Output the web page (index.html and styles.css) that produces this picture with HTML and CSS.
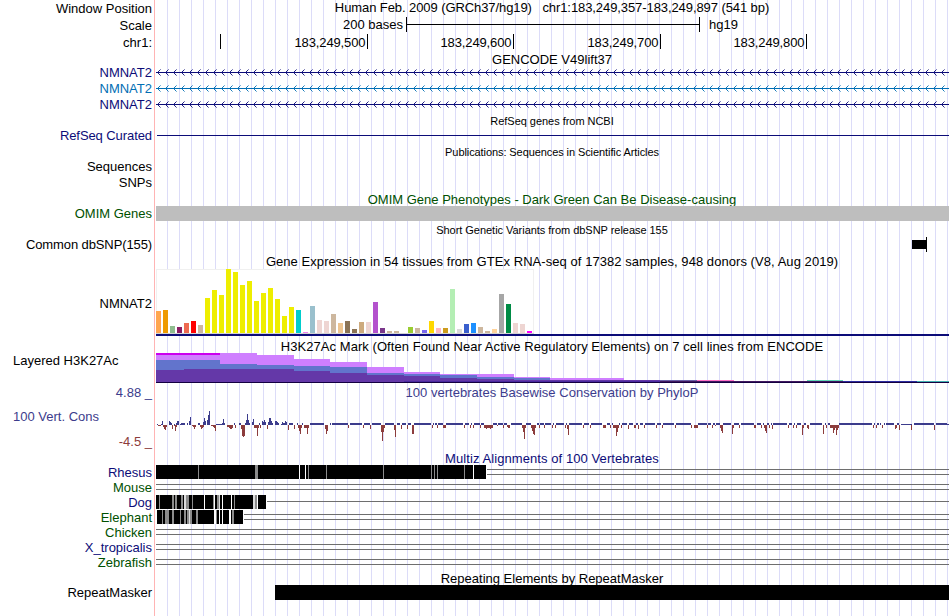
FILE: index.html
```
<!DOCTYPE html>
<html lang="en">
<head>
<meta charset="utf-8">
<title>Genome Browser</title>
<link rel="stylesheet" href="styles.css">
</head>
<body>
<main class="browser">
  <div class="row h17"><div class="label">Window Position</div><div class="title t-pos">Human Feb. 2009 (GRCh37/hg19) &nbsp; chr1:183,249,357-183,249,897 (541 bp)</div></div>
  <div class="row h17"><div class="label">Scale</div><svg class="plot" id="scale"></svg></div>
  <div class="row h17"><div class="label">chr1:</div><svg class="plot" id="ruler"></svg></div>
  <div class="row h13"><div class="title t-gencode">GENCODE V49lift37</div></div>
  <div class="row h16"><div class="label navy">NMNAT2</div><svg class="plot gene" data-color="#0c0c78"></svg></div>
  <div class="row h16"><div class="label azure">NMNAT2</div><svg class="plot gene" data-color="#006eb4"></svg></div>
  <div class="row h16"><div class="label navy">NMNAT2</div><svg class="plot gene" data-color="#0c0c78"></svg></div>
  <div class="row h15"><div class="title small">RefSeq genes from NCBI</div></div>
  <div class="row h16"><div class="label navy t-refseq">RefSeq Curated</div><svg class="plot" id="refseq"></svg></div>
  <div class="row h16"><div class="title small t-pub">Publications: Sequences in Scientific Articles</div></div>
  <div class="row h16"><div class="label lift">Sequences</div></div>
  <div class="row h16"><div class="label lift">SNPs</div></div>
  <div class="row h15"><div class="title green">OMIM Gene Phenotypes - Dark Green Can Be Disease-causing</div></div>
  <div class="row h15"><div class="label green">OMIM Genes</div><div class="block omim"></div></div>
  <div class="row h15"><div class="title small">Short Genetic Variants from dbSNP release 155</div></div>
  <div class="row h16"><div class="label t-common">Common dbSNP(155)</div><svg class="plot" id="dbsnp"></svg></div>
  <div class="row h16"><div class="title t-gtex">Gene Expression in 54 tissues from GTEx RNA-seq of 17382 samples, 948 donors (V8, Aug 2019)</div></div>
  <div class="row h69"><div class="label drop">NMNAT2</div><svg class="plot" id="gtex"></svg></div>
  <div class="row h16"><div class="title t-h3k">H3K27Ac Mark (Often Found Near Active Regulatory Elements) on 7 cell lines from ENCODE</div></div>
  <div class="row h31"><div class="label left">Layered H3K27Ac</div><svg class="plot" id="h3k"></svg></div>
  <div class="row h16"><div class="label violet">4.88 _</div><div class="title violet t-phylo">100 vertebrates Basewise Conservation by PhyloP</div></div>
  <div class="row h50"><div class="label cons"><span class="name">100 Vert. Cons</span><span class="min">-4.5 _</span></div><svg class="plot" id="phylop"></svg></div>
  <div class="row h15"><div class="title navy t-multiz">Multiz Alignments of 100 Vertebrates</div></div>
  <div class="row h15"><div class="label navy">Rhesus</div><svg class="plot" id="rhesus"></svg></div>
  <div class="row h15"><div class="label green">Mouse</div><svg class="plot" id="mouse"></svg></div>
  <div class="row h15"><div class="label navy">Dog</div><svg class="plot" id="dog"></svg></div>
  <div class="row h15"><div class="label green">Elephant</div><svg class="plot" id="elephant"></svg></div>
  <div class="row h15"><div class="label green">Chicken</div><svg class="plot" id="chicken"></svg></div>
  <div class="row h15"><div class="label navy">X_tropicalis</div><svg class="plot" id="xtrop"></svg></div>
  <div class="row h15"><div class="label green">Zebrafish</div><svg class="plot" id="zebrafish"></svg></div>
  <div class="row h15"><div class="title">Repeating Elements by RepeatMasker</div></div>
  <div class="row h15"><div class="label">RepeatMasker</div><div class="block repeat"></div></div>
</main>
<script src="tracks.js"></script>
</body>
</html>
```
FILE: styles.css
```
* { box-sizing: border-box; }
body { margin: 0; background: #fff; font-family: "Liberation Sans", Arial, sans-serif; font-size: 13px; color: #000; }
.browser {
  width: 949px; height: 616px; overflow: hidden;
  background:
    linear-gradient(#ffb4b4, #ffb4b4) 154px 0 / 1px 100% no-repeat,
    repeating-linear-gradient(to right, #dcdcf8 0 1px, transparent 1px 12px) 167px 0 / 100% 100% no-repeat;
}
.row { display: grid; grid-template-columns: 155px 794px; grid-template-rows: 100%; }
.h13 { height: 13px; } .h15 { height: 15px; } .h16 { height: 16px; } .h17 { height: 17px; }
.h31 { height: 31px; } .h50 { height: 50px; } .h69 { height: 69px; }
.label { grid-column: 1; display: flex; align-items: center; justify-content: flex-end; padding: 1px 3px 0 0; line-height: 14px; white-space: nowrap; }
.label.left { justify-content: flex-start; align-items: flex-start; padding: 1px 0 0 13px; }
.label.lift { padding-top: 0; padding-bottom: 1px; }
.label.drop { padding-top: 3px; }
.label.cons { flex-direction: column; align-items: stretch; justify-content: space-between; padding: 10px 3px 1px 13px; color: #3c3c8c; }
.cons .min { text-align: right; color: #8c3c3c; }
.title { grid-column: 2; display: flex; align-items: center; justify-content: center; padding-top: 3px; line-height: 14px; white-space: nowrap; }
.title.small { font-size: 11px; letter-spacing: -0.035px; }
.title.t-pub { padding-top: 1px; letter-spacing: -0.085px; }
.t-pos { padding: 0 0 2px; letter-spacing: -0.085px; }
.t-gencode { padding-top: 5px; }
.t-gtex { letter-spacing: 0.055px; }
.t-h3k { letter-spacing: 0.057px; }
.t-phylo { padding-top: 1px; letter-spacing: 0.02px; }
.t-multiz { letter-spacing: 0.08px; }
.t-refseq { letter-spacing: -0.08px; }
.t-common { letter-spacing: -0.11px; }
.plot { grid-column: 2; display: block; width: 794px; height: 100%; }
.plot text { font-size: 13px; }
.navy { color: #0c0c78; }
.azure { color: #006eb4; }
.green { color: #005000; }
.violet { color: #3c3c8c; }
.block { grid-column: 2; }
.omim { margin-left: 1px; background: #bebebe; }
.repeat { margin-left: 120px; background: #000; }
```
FILE: tracks.js
```
const NS = 'http://www.w3.org/2000/svg';
const RIGHT = 949;

// Each plot uses page x coordinates; y runs from the given top.
function setup(svg, top, height) {
  svg.setAttribute('viewBox', `155 ${top} 794 ${height}`);
  return svg;
}
function plot(id, top, height) { return setup(document.getElementById(id), top, height); }
function add(svg, tag, attrs, text) {
  const el = document.createElementNS(NS, tag);
  for (const k in attrs) el.setAttribute(k, attrs[k]);
  if (text) el.textContent = text;
  svg.appendChild(el);
  return el;
}
function rect(svg, x, y, w, h, fill) { add(svg, 'rect', { x, y, width: w, height: h, fill }); }

const scale = plot('scale', 17, 17);
rect(scale, 406, 17, 1, 15, '#000');
rect(scale, 406, 24, 294, 1, '#000');
rect(scale, 699, 17, 1, 15, '#000');
add(scale, 'text', { x: 343, y: 29, textLength: 60 }, '200 bases');
add(scale, 'text', { x: 709, y: 29 }, 'hg19');

const ruler = plot('ruler', 34, 17);
[[220], [367, '183,249,500'], [513, '183,249,600'], [660, '183,249,700'], [806, '183,249,800']].forEach(([x, t]) => {
  rect(ruler, x, 34, 1, 15, '#000');
  if (t) add(ruler, 'text', { x: x - 72.5, y: 47, textLength: 71 }, t);
});

document.querySelectorAll('.gene').forEach(svg => {
  setup(svg, 0, 16);
  const c = svg.dataset.color;
  rect(svg, 156, 8, 793, 1, c);
  let arms = '', ends = '';
  for (let x = 157; x < RIGHT; x += 8) {
    arms += `M${x + 1} 7h1v1h-1zM${x + 2} 6h1v1h-1zM${x + 1} 9h1v1h-1zM${x + 2} 10h1v1h-1z`;
    ends += `M${x + 3} 5h1v1h-1zM${x + 3} 11h1v1h-1z`;
  }
  add(svg, 'path', { d: arms, fill: c, opacity: 0.9 });
  add(svg, 'path', { d: ends, fill: c, opacity: 0.5 });
});

rect(plot('refseq', 127, 16), 157, 135, 792, 1, '#0c0c78');

const snp = plot('dbsnp', 236, 16);
rect(snp, 912, 240, 14, 9, '#000');
rect(snp, 926, 237, 1, 15, '#000');

const gtex = plot('gtex', 268, 69);
const Y = '#eeee00', T = '#cdb79e', P = '#eed5d2';
const tissues = [
  ['#ffa54f', 311], ['#ee9a00', 310], ['#8fbc8f', 326], ['#8b1c62', 327], ['#ee6a50', 323], ['#ff0000', 321], [T, 325],
  [Y, 298], [Y, 290], [Y, 295], [Y, 269], [Y, 272], [Y, 285], [Y, 281], [Y, 301], [Y, 293], [Y, 288], [Y, 299], [Y, 316], [Y, 307],
  ['#00cdcd', 310], ['#ee82ee', 332], ['#9ac0cd', 306], [P, 320], [P, 321], [T, 314], ['#eec591', 323], ['#8b7355', 321],
  ['#8b7355', 329], ['#cdaa7d', 322], [P, 322], ['#b452cd', 302], ['#7a378b', 328], [T, 331], [T, 331], [T, 333],
  ['#9acd32', 327], [T, 328], ['#7a67ee', 330], ['#ffd700', 321], ['#ffb6c1', 328], ['#cd9b1d', 328], ['#b4eeb4', 289],
  ['#d9d9d9', 329], ['#3a5fcd', 324], ['#1e90ff', 323], [T, 327], [T, 331], ['#ffd39b', 329], ['#a6a6a6', 294],
  ['#008b45', 304], [P, 323], [P, 324], ['#ff00ff', 331]
];
rect(gtex, 156, 269, 378, 65, '#f0f0f0');
rect(gtex, 157, 270, 376, 63, '#fff');
rect(gtex, 156, 333, 378, 1, '#d3d3d3');
tissues.forEach(([c, top], i) => rect(gtex, 156 + i * 7, top, 5, 333 - top, c));
rect(gtex, 156, 334, 793, 2, '#0c0c78');

const h3k = plot('h3k', 353, 31);
function steps(color, list, bottom) {
  list.forEach(([x0, x1, y]) => rect(h3k, x0, y, x1 - x0, bottom - y, color));
}
steps('#cc00ee', [[156, 220, 353]], 356);
steps('#cf7fff', [[156, 220, 355], [220, 257, 353], [257, 294, 355], [294, 330, 359], [330, 367, 362], [367, 404, 367], [404, 440, 372], [440, 514, 374], [514, 550, 377], [550, 624, 378]], 382);
steps('#6274cc', [[156, 220, 360], [220, 257, 364], [257, 294, 365], [294, 330, 366], [330, 367, 367], [367, 404, 373], [404, 440, 374], [440, 477, 375], [477, 514, 377], [514, 550, 378]], 382);
steps('#6438a8', [[156, 184, 370], [184, 294, 369], [294, 330, 371], [330, 367, 373], [367, 404, 375], [404, 440, 376], [440, 477, 378], [477, 514, 379], [514, 660, 380]], 382);
steps('#6a60a8', [[660, 697, 380]], 381);
steps('#ff70c8', [[697, 734, 380]], 381);
steps('#60d8b8', [[807, 843, 380]], 381);
rect(h3k, 156, 382, 793, 1, '#140040');
steps('#4a28a0', [[404, 660, 381]], 382);
steps('#401860', [[660, 843, 381]], 382);
steps('#2c2ca0', [[843, 917, 381]], 382);
steps('#40b0b0', [[917, 949, 381]], 382);

const phylo = plot('phylop', 400, 50);
// [x, height] or [x, height, width]; x is an offset from 150.
const up = [
  [7, 1], [11, 1], [12, 4], [19, 4], [20, 3], [21, 2], [24, 1], [26, 2], [27, 4], [28, 4], [30, 1], [31, 2, 4], [37, 2], [39, 4], [40, 8],
  [48, 2, 2], [53, 3], [54, 7], [55, 4], [57, 5], [58, 10], [59, 14], [66, 1, 6], [72, 2], [73, 6], [74, 2], [84, 2], [89, 2, 2],
  [95, 2], [96, 5], [97, 11], [98, 5], [99, 2], [102, 3], [103, 6], [109, 2], [112, 4], [113, 3], [114, 5], [115, 3], [118, 3], [119, 7], [120, 7],
  [121, 4], [122, 2], [125, 4], [126, 4], [127, 3], [128, 2], [131, 1], [132, 3], [133, 2, 2], [135, 4], [136, 3], [139, 2, 4], [147, 2], [152, 2],
  [160, 2, 14], [180, 2], [182, 2, 16]
];
const down = [
  [8, 1, 3], [13, 2], [14, 4], [15, 5], [16, 2], [22, 4], [24, 1], [25, 6], [26, 2], [42, 1], [43, 2], [44, 4], [45, 2], [50, 2], [51, 4], [52, 3], [53, 2], [61, 1], [62, 1],
  [63, 2], [64, 3], [65, 6], [77, 2], [78, 2], [79, 3], [80, 4], [81, 4], [82, 3], [85, 3], [91, 4], [92, 11], [93, 12], [94, 11], [104, 3, 5], [107, 11], [110, 3], [117, 4],
  [138, 5], [144, 4], [148, 3], [149, 6], [150, 9], [151, 3], [154, 3, 5], [157, 9], [175, 4], [176, 9], [177, 6], [198, 3],
  [213, 3], [220, 4], [231, 7], [232, 16], [233, 7], [234, 3], [244, 5], [245, 12], [251, 4], [257, 4], [262, 9, 2], [282, 3], [287, 3], [293, 3, 3],
  [314, 3], [320, 3], [323, 3], [330, 3], [334, 3, 9], [336, 4], [340, 4], [347, 1], [353, 3], [357, 2], [358, 3, 2], [372, 3], [373, 7], [374, 14], [375, 3],
  [381, 3], [382, 6], [383, 9], [384, 10], [385, 3], [389, 3], [394, 3], [402, 3], [405, 3], [415, 3], [417, 4], [418, 10], [433, 3], [440, 3],
  [453, 3, 3], [460, 3], [463, 3, 6], [466, 11], [467, 7], [471, 3], [478, 4], [484, 3, 2], [488, 4], [494, 3], [506, 3], [512, 3], [525, 3],
  [541, 3], [544, 3, 4], [557, 3], [562, 3], [565, 1], [570, 3], [571, 6], [572, 8], [582, 9], [583, 3], [589, 3], [604, 3, 2], [611, 3], [614, 3],
  [615, 6], [616, 8], [619, 3], [622, 4], [638, 3], [643, 3], [646, 3], [652, 10], [653, 3], [657, 3], [658, 4], [673, 9], [676, 3], [680, 3, 9], [683, 8],
  [684, 5], [686, 10], [687, 5], [723, 3], [726, 3], [732, 3], [745, 4], [746, 3], [749, 5], [761, 5], [784, 5]
];
// Runs of flat positive score, as [first, last] offsets.
const flat = [
  [200, 211], [214, 219], [222, 230], [235, 243], [247, 249], [252, 255], [258, 260], [264, 280], [283, 283], [285, 286], [288, 292], [296, 312],
  [315, 318], [321, 321], [324, 329], [331, 333], [343, 346], [348, 352], [354, 356], [361, 371], [376, 380], [387, 388], [390, 393], [395, 400],
  [403, 403], [406, 413], [416, 416], [419, 431], [434, 438], [441, 451], [457, 459], [462, 462], [469, 469], [472, 476], [479, 482], [486, 487],
  [490, 492], [495, 504], [507, 510], [513, 523], [526, 540], [548, 556], [558, 560], [563, 564], [566, 569], [573, 580], [584, 588], [591, 603],
  [607, 610], [613, 613], [617, 618], [621, 621], [623, 636], [639, 641], [644, 644], [647, 650], [654, 655], [660, 671], [675, 675], [678, 679],
  [689, 721], [724, 724], [727, 728], [730, 730], [734, 734], [736, 743], [747, 748], [764, 783], [786, 796]
];
up.forEach(([x, h, w = 1]) => rect(phylo, 150 + x, 425 - h, w, h, '#3c3c8c'));
rect(phylo, 901, 424, 11, 1, '#3c3c8c');
rect(phylo, 947, 424, 2, 1, '#3c3c8c');
flat.forEach(([a, b]) => rect(phylo, 150 + a, 423, b - a + 1, 2, '#3c3c8c'));
down.forEach(([x, h, w = 1]) => rect(phylo, 150 + x, 425, w, h, '#8c3c3c'));

// Alignment rows: x of bar start and end, line offsets, then stripes [x, width, colour].
const G = '#8c8c8c', W = '#fff', L = '#dcdcdc';
function align(id, from, to, lines, stripes) {
  const s = plot(id, 0, 15);
  lines.forEach(y => rect(s, to ? to + 1 : 156, y, 794, 1, '#6e6e6e'));
  if (to) rect(s, from, 0, to - from, 14, '#000');
  stripes.forEach(([x, w, c]) => rect(s, x, 0, w, 14, c));
}
align('rhesus', 156, 486, [4, 9], [[198, 1, G], [255, 3, G], [299, 1, W], [305, 1, W], [308, 1, G], [326, 1, G], [383, 1, G], [431, 1, G], [434, 1, G], [437, 1, G], [464, 1, G], [473, 1, W]]);
align('mouse', 0, 0, [4, 9], []);
align('dog', 156, 266, [6], [[159, 1, G], [172, 2, G], [175, 2, G], [181, 2, G], [184, 2, L], [186, 3, G], [192, 1, G], [204, 1, W], [213, 1, G], [214, 1, W], [217, 2, G], [219, 1, L], [222, 1, W], [231, 1, W], [234, 1, G], [253, 2, L], [255, 2, G], [257, 1, W]]);
align('elephant', 157, 243, [4, 9], [[162, 1, G], [165, 4, G], [172, 2, G], [180, 1, G], [184, 2, G], [187, 2, G], [189, 1, L], [190, 2, G], [196, 2, G], [214, 2, W], [216, 1, G], [219, 1, W], [222, 1, W], [229, 2, W], [232, 2, G]]);
align('chicken', 0, 0, [4, 9], []);
align('xtrop', 0, 0, [4, 9], []);
align('zebrafish', 0, 0, [4, 9], []);
```
